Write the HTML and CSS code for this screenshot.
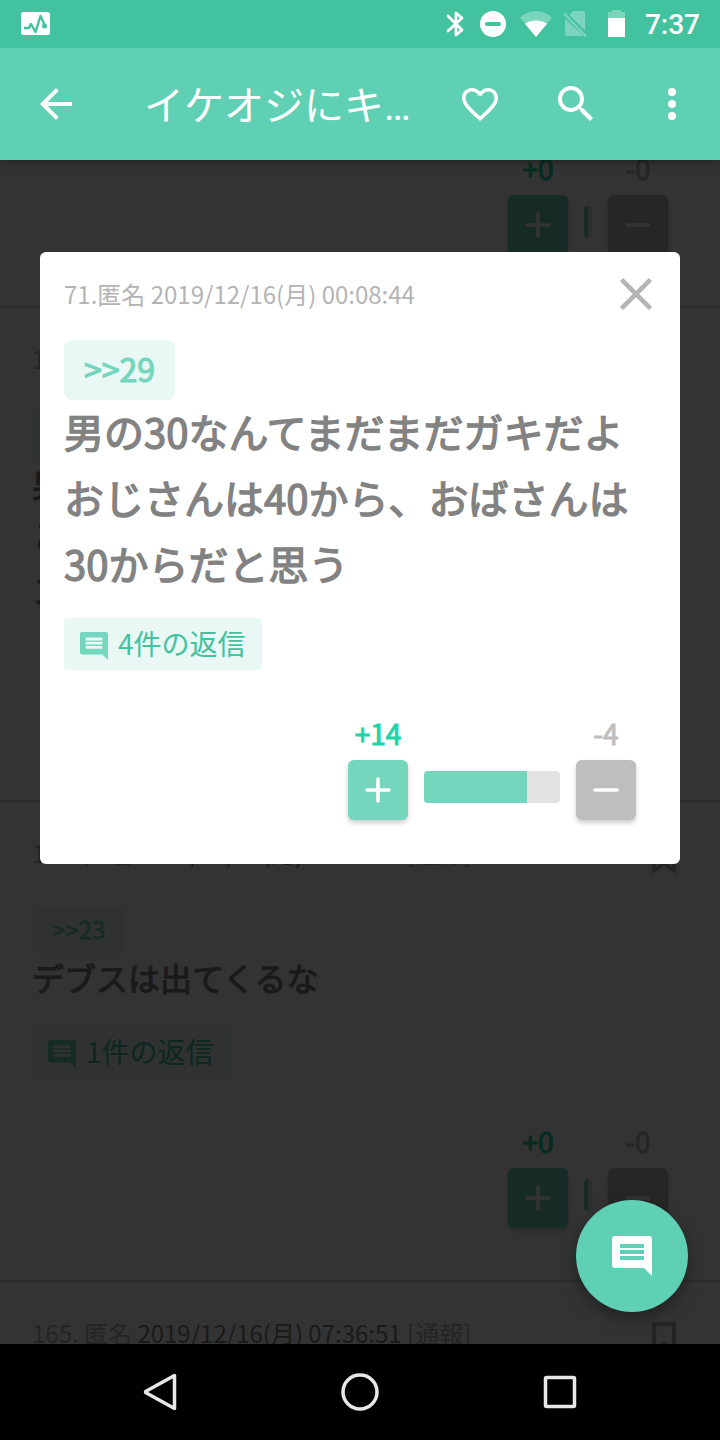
FILE: index.html
```html
<!DOCTYPE html>
<html lang="ja">
<head>
<meta charset="utf-8">
<meta name="viewport" content="width=device-width, initial-scale=1">
<title>イケオジにキ…</title>
<link rel="stylesheet" href="styles.css">
</head>
<body>
<svg hidden>
  <symbol id="comment" viewBox="0 0 40 40"><path fill-rule="evenodd" d="M3 0H37Q40 0 40 3V40L32 32H3Q0 32 0 29V3Q0 0 3 0ZM8 8V12H32V8ZM8 14V18H32V14ZM8 20V24H32V20Z"/></symbol>
  <symbol id="bookmark" viewBox="0 0 24 32"><path fill-rule="evenodd" d="M0 0H24V32L12 24 0 32ZM4 4V25L10.500 20.500Q12 19.500 13.500 20.500L20 25V4Z"/></symbol>
  <symbol id="plus" viewBox="0 0 26 26"><path d="M2 13H24M13 2V24" fill="none" stroke="currentColor" stroke-width="3.600" stroke-linecap="round"/></symbol>
  <symbol id="minus" viewBox="0 0 26 26"><path d="M2 13H24" fill="none" stroke="currentColor" stroke-width="3.600" stroke-linecap="round"/></symbol>
</svg>
<div class="screen">
  <div class="status-bar">
    <svg class="status-app" width="30" height="24" viewBox="0 0 30 24"><rect x="1" y="0" width="29" height="23" rx="2.500" fill="#fff"/><path d="M4 16H9L11 12 15.500 20 20.500 4 25 14" fill="none" stroke="#43c29f" stroke-width="2.400" stroke-linejoin="round"/><circle cx="24.500" cy="14" r="2.500" fill="#43c29f"/></svg>
    <div class="status-icons">
      <svg width="18" height="28" viewBox="0 0 18 28"><path d="M2 6 16 20 10 25V3L16 8 2 21" fill="none" stroke="#fff" stroke-width="2.800" stroke-linecap="round" stroke-linejoin="round"/></svg>
      <svg class="dnd" width="26" height="26" viewBox="0 0 26 26"><circle cx="13" cy="13" r="13" fill="#fff"/><path d="M7 13H19" stroke="#43c29f" stroke-width="4" stroke-linecap="round"/></svg>
      <svg class="wifi" width="32" height="26" viewBox="0 0 32 26"><path d="M16 26 0 6.500Q7 0 16 0T32 6.500Z" fill="#fff" opacity=".3"/><path d="M16 26 4.800 12.500Q10 9.500 16 9.500T27.200 12.500Z" fill="#fff"/></svg>
      <svg class="sim" width="24" height="28" viewBox="0 0 24 28"><g opacity=".3"><path d="M10 1H20Q22 1 22 3V20.500L6.500 5ZM2 8.500 20.500 26H4Q2 26 2 24Z" fill="#fff"/><path d="M1 3.500 23 26.500" stroke="#fff" stroke-width="2.400"/></g></svg>
      <svg class="battery" width="18" height="28" viewBox="0 0 18 28"><path d="M0 2H4V0H13V2H17V8H0Z" fill="#fff" opacity=".3"/><path d="M0 8H17V27H0Z" fill="#fff"/></svg>
      <span class="clock">7:37</span>
    </div>
  </div>

  <header class="app-bar">
    <button class="icon-button" aria-label="戻る"><svg width="48" height="48" viewBox="0 0 24 24"><path d="M20 11H7.830l5.590-5.590L12 4l-8 8 8 8 1.410-1.410L7.830 13H20z"/></svg></button>
    <h1 class="app-title">イケオジにキ…</h1>
    <div class="app-actions">
      <button class="icon-button" aria-label="お気に入り"><svg width="36" height="33" viewBox="2 3 20 18.350"><path d="M16.500 3c-1.740 0-3.410.810-4.500 2.090C10.910 3.810 9.240 3 7.500 3 4.420 3 2 5.420 2 8.500c0 3.780 3.400 6.860 8.550 11.540L12 21.350l1.450-1.320C18.600 15.360 22 12.280 22 8.500 22 5.420 19.580 3 16.500 3zm-4.400 15.550l-.1.100-.1-.1C7.140 14.240 4 11.390 4 8.500 4 6.500 5.500 5 7.500 5c1.540 0 3.040.990 3.570 2.360h1.870C13.460 5.990 14.960 5 16.500 5c2 0 3.500 1.500 3.500 3.500 0 2.890-3.140 5.740-7.900 10.050z"/></svg></button>
      <button class="icon-button" aria-label="検索"><svg width="48" height="48" viewBox="0 0 24 24"><path d="M15.500 14h-.790l-.280-.270C15.410 12.590 16 11.110 16 9.500 16 5.910 13.090 3 9.500 3S3 5.910 3 9.500 5.910 16 9.500 16c1.610 0 3.090-.590 4.230-1.570l.270.280v.790l5 4.990L20.490 19l-4.990-5zm-6 0C7.010 14 5 11.990 5 9.500S7.010 5 9.500 5 14 7.010 14 9.500 11.990 14 9.500 14z"/></svg></button>
      <button class="icon-button" aria-label="メニュー"><svg width="48" height="48" viewBox="0 0 24 24"><circle cx="12" cy="6" r="2"/><circle cx="12" cy="12" r="2"/><circle cx="12" cy="18" r="2"/></svg></button>
    </div>
  </header>

  <main class="content">
    <div class="post-list">
      <article class="post post-scrolled">
        <div class="votes">
          <div class="vote vote-up"><span class="vote-count">+0</span><button class="vote-button" aria-label="プラス"><svg><use href="#plus"/></svg></button></div>
          <div class="vote-bar"><div class="vote-fill" style="width:50%"></div></div>
          <div class="vote vote-down"><span class="vote-count">-0</span><button class="vote-button" aria-label="マイナス"><svg><use href="#minus"/></svg></button></div>
        </div>
      </article>
      <article class="post">
        <div class="post-meta"><span>163. 匿名</span></div>
        <a class="quote" href="#p71">&gt;&gt;71</a>
        <p class="post-text">男<br>と<br>ン</p>
        <div class="votes">
          <div class="vote vote-up"><span class="vote-count">+0</span><button class="vote-button" aria-label="プラス"><svg><use href="#plus"/></svg></button></div>
          <div class="vote-bar"><div class="vote-fill" style="width:50%"></div></div>
          <div class="vote vote-down"><span class="vote-count">-0</span><button class="vote-button" aria-label="マイナス"><svg><use href="#minus"/></svg></button></div>
        </div>
      </article>
      <article class="post">
        <div class="post-meta"><span>164. 匿名 <time>2019/12/16(月) 07:36:51</time> <a href="#report">[通報]</a></span><button class="bookmark" aria-label="ブックマーク"><svg><use href="#bookmark"/></svg></button></div>
        <a class="quote" href="#p23">&gt;&gt;23</a>
        <p class="post-text">デブスは出てくるな</p>
        <a class="replies" href="#replies"><svg><use href="#comment"/></svg>1件の返信</a>
        <div class="votes">
          <div class="vote vote-up"><span class="vote-count">+0</span><button class="vote-button" aria-label="プラス"><svg><use href="#plus"/></svg></button></div>
          <div class="vote-bar"><div class="vote-fill" style="width:50%"></div></div>
          <div class="vote vote-down"><span class="vote-count">-0</span><button class="vote-button" aria-label="マイナス"><svg><use href="#minus"/></svg></button></div>
        </div>
      </article>
      <article class="post">
        <div class="post-meta"><span>165. 匿名 <time>2019/12/16(月) 07:36:51</time> <a href="#report">[通報]</a></span><button class="bookmark" aria-label="ブックマーク"><svg><use href="#bookmark"/></svg></button></div>
      </article>
    </div>

    <div class="overlay">
      <section class="dialog" role="dialog" aria-label="コメント71">
        <div class="dialog-head">
          <span>71.匿名 2019/12/16(月) 00:08:44</span>
          <button class="close" aria-label="閉じる"><svg width="32" height="32" viewBox="0 0 32 32"><path d="M1.500 1.500 30.500 30.500M30.500 1.500 1.500 30.500" fill="none" stroke="currentColor" stroke-width="4.500"/></svg></button>
        </div>
        <a class="quote" href="#p29">&gt;&gt;29</a>
        <p class="post-text">男の30なんてまだまだガキだよ<br>おじさんは40から、おばさんは30からだと思う</p>
        <a class="replies" href="#replies"><svg><use href="#comment"/></svg>4件の返信</a>
        <div class="votes">
          <div class="vote vote-up"><span class="vote-count">+14</span><button class="vote-button" aria-label="プラス"><svg><use href="#plus"/></svg></button></div>
          <div class="vote-bar"><div class="vote-fill" style="width:76%"></div></div>
          <div class="vote vote-down"><span class="vote-count">-4</span><button class="vote-button" aria-label="マイナス"><svg><use href="#minus"/></svg></button></div>
        </div>
      </section>
    </div>
    <button class="fab" aria-label="コメントする"><svg><use href="#comment"/></svg></button>
  </main>

  <nav class="nav-bar">
    <button aria-label="戻る"><svg width="40" height="40" viewBox="0 0 40 40"><path d="M34.500 3.500V36.500L6 20.800Q5 20 6 19.200Z"/></svg></button>
    <button aria-label="ホーム"><svg width="40" height="40" viewBox="0 0 40 40"><circle cx="20" cy="20" r="17"/></svg></button>
    <button aria-label="最近使ったアプリ"><svg width="40" height="40" viewBox="0 0 40 40"><rect x="5.500" y="5.500" width="29" height="29" rx="1"/></svg></button>
  </nav>
</div>
</body>
</html>
```
FILE: styles.css
```css
:root {
  --green: #73d6bd;
  --green-dark: #43c29f;
  --bar: #5fd0b3;
  --tint: #e9f8f5;
  --bold: .035em currentColor;
}

* { box-sizing: border-box; }

body {
  margin: 0;
  font-family: "Noto Sans CJK JP", sans-serif;
  background: #000;
}

button {
  display: flex;
  align-items: center;
  justify-content: center;
  padding: 0;
  border: 0;
  background: none;
  color: inherit;
}

a { color: inherit; text-decoration: none; }
svg { display: block; flex: none; fill: currentColor; }
svg[hidden] { display: none; }

.screen {
  display: flex;
  flex-direction: column;
  height: 100vh;
}

.status-bar {
  flex: none;
  height: 48px;
  padding: 0 20px;
  display: flex;
  align-items: center;
  justify-content: space-between;
  position: relative;
  z-index: 2;
  background: var(--green-dark);
}

.status-icons {
  display: flex;
  align-items: center;
}

.dnd { margin-left: 16px; }
.wifi { margin-left: 14px; }
.sim { margin-left: 11px; }
.battery { margin-left: 21px; }

.clock {
  margin-left: 19px;
  padding-top: 2px;
  font: 500 28px/46px Roboto, sans-serif;
  color: #fff;
}

.app-bar {
  flex: none;
  height: 112px;
  padding: 0 24px 0 32px;
  display: flex;
  align-items: center;
  background: var(--bar);
  color: #fff;
  position: relative;
  z-index: 1;
  box-shadow: 0 1px 8px rgba(0, 0, 0, .4);
}

.icon-button { width: 48px; height: 48px; }

.app-title {
  flex: 1;
  min-width: 0;
  margin: 0 0 0 64px;
  padding-top: 6px;
  overflow: hidden;
  white-space: nowrap;
  text-overflow: ellipsis;
  font: 400 40px/60px Roboto, "Noto Sans CJK JP", sans-serif;
}

.app-actions { display: flex; gap: 48px; }

.content {
  flex: 1;
  min-height: 0;
  position: relative;
  overflow: hidden;
  background: #fff;
}

.post-list { margin-top: -35px; }

.post {
  padding: 33px 52px 52px 32px;
  border-top: 2px solid #ddd;
}

.post-scrolled { padding-top: 0; padding-bottom: 51px; border-top: 0; }

.post-meta {
  display: flex;
  justify-content: space-between;
  margin: 0 -8px 36px 0;
  font-size: 24px;
  line-height: 36px;
  color: #b4b4b4;
}

.post-meta time { color: #828282; }
.bookmark { height: 46px; margin-bottom: -10px; color: #b4b4b4; }
.bookmark svg { width: 24px; height: 32px; }

.quote {
  display: block;
  width: fit-content;
  padding: 0 20px 2px;
  border-radius: 8px;
  background: var(--tint);
  color: var(--green);
  font-size: 24px;
  line-height: 44px;
  -webkit-text-stroke: var(--bold);
}

.post-text {
  margin: -2px 0 0;
  padding-bottom: 2px;
  color: #828282;
  font-size: 32px;
  line-height: 53px;
  -webkit-text-stroke: var(--bold);
}

.replies {
  display: flex;
  align-items: center;
  gap: 10px;
  width: fit-content;
  height: 52px;
  margin: 20px 0;
  padding: 0 16px 2px;
  border-radius: 4px;
  background: var(--tint);
  color: var(--green-dark);
  font-size: 28px;
}

.replies svg {
  width: 28px;
  height: 28px;
  margin-top: 6px;
  color: var(--green);
}

.votes {
  display: flex;
  align-items: flex-end;
  justify-content: flex-end;
  gap: 16px;
  padding-top: 24px;
}

.vote {
  display: flex;
  flex-direction: column;
  align-items: center;
  gap: 8px;
}

.vote-count {
  font-size: 28px;
  line-height: 38px;
  -webkit-text-stroke: var(--bold);
}

.vote-up .vote-count { color: #20d4aa; }
.vote-down .vote-count { color: #bebebe; }

.vote-button {
  width: 60px;
  height: 60px;
  border-radius: 6px;
  color: #fff;
  box-shadow: 0 3px 5px rgba(0, 0, 0, .2);
}

.vote-button svg { width: 26px; height: 26px; }
.vote-up .vote-button { background: var(--green); }
.vote-down .vote-button { background: #bebebe; }

.vote-bar {
  width: 8px;
  height: 32px;
  margin-bottom: 17px;
  border-radius: 4px;
  overflow: hidden;
  background: #e2e2e2;
}

.vote-fill { height: 100%; background: var(--green); }

.overlay {
  position: absolute;
  inset: 0;
  padding: 92px 40px 0;
  background: rgba(0, 0, 0, .8);
}

.dialog {
  padding: 24px 24px 44px;
  border-radius: 6px;
  background: #fff;
}

.dialog-head {
  display: flex;
  align-items: center;
  justify-content: space-between;
  margin: 0 4px 28px 0;
  font-size: 24px;
  line-height: 36px;
  color: #b4b4b4;
}

.dialog .quote { padding-bottom: 4px; font-size: 32px; line-height: 56px; }
.dialog .post-text { font-size: 40px; line-height: 66px; }
.dialog .votes { padding-right: 20px; }
.dialog .vote-bar { width: 136px; }

.fab {
  position: absolute;
  right: 32px;
  bottom: 32px;
  width: 112px;
  height: 112px;
  border-radius: 50%;
  background: var(--bar);
  color: #fff;
  box-shadow: 0 6px 16px rgba(0, 0, 0, .35);
}

.fab svg { width: 40px; height: 40px; }

.nav-bar {
  flex: none;
  height: 96px;
  display: flex;
  justify-content: center;
  background: #000;
}

.nav-bar button { flex: 0 1 200px; }
.nav-bar svg { fill: none; stroke: #e8e8e8; stroke-width: 3.5; stroke-linejoin: round; }
```
